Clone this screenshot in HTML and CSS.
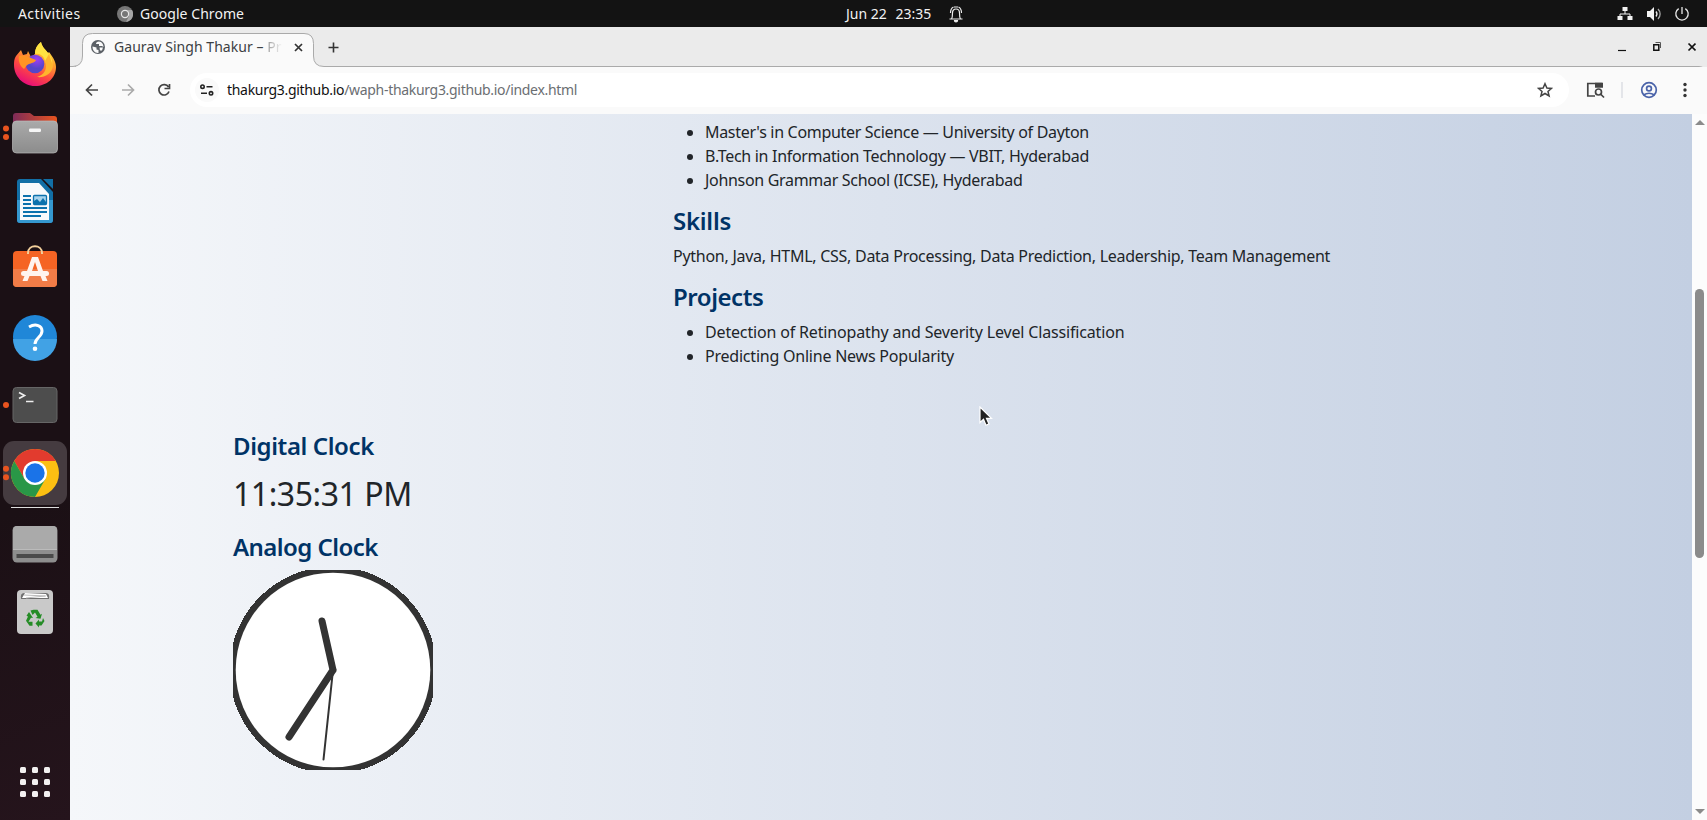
FILE: index.html
```
<!DOCTYPE html>
<html lang="en">
<head>
<meta charset="utf-8">
<title>Gaurav Singh Thakur</title>
<link rel="stylesheet" href="styles.css">
</head>
<body>
<header class="topbar">
  <span class="activities">Activities</span>
  <svg class="app-icon" width="16" height="16" viewBox="0 0 16 16"><circle cx="8" cy="8" r="8" fill="#777"/><path d="M8 4h7A8 8 0 0 1 9 16l3-6z" fill="#a5a5a5"/><circle cx="8" cy="8" r="4.200" fill="#e8e8e8"/><circle cx="8" cy="8" r="3" fill="#777"/></svg>
  <span class="app-name">Google Chrome</span>
  <div class="datetime"><span class="date">Jun 22</span><span class="time">23:35</span>
    <svg width="16" height="18" viewBox="0 0 16 18" fill="none" stroke="#eee" stroke-width="1.2"><path d="M1.5 14h13M3.5 14c1-1.5 1-3 1-6 0-2.5 1.300-4 3.500-4s3.500 1.500 3.500 4c0 3 0 4.500 1 6M2.500 8c0-3.500 1-5 3-6M13.500 8c0-3.500-1-5-3-6M6 2h4"/><path d="M6.500 15.500a1.500 1.500 0 0 0 3 0z" fill="#eee"/></svg>
  </div>
  <div class="tray">
    <svg width="16" height="16" viewBox="0 0 16 16"><path d="M5.500 1h5v4h-5zM0.500 10h5v4h-5zM10.500 10h5v4h-5z" fill="#f2f2f2"/><path d="M8 5v3M3 10.500V8h10v2.500" fill="none" stroke="#f2f2f2"/></svg>
    <svg width="16" height="16" viewBox="0 0 16 16"><path d="M1 5h3l4-4v14l-4-4H1z" fill="#f2f2f2"/><path d="M10 5.500a4 4 0 0 1 0 5" fill="none" stroke="#eee" stroke-width="1.300"/><path d="M12 3a7 7 0 0 1 0 10" fill="none" stroke="#aaa" stroke-width="1.300"/></svg>
    <svg width="16" height="16" viewBox="0 0 16 16" fill="none" stroke="#e6e6e6" stroke-width="1.300"><path d="M8 1v7M4.700 2.600a6.200 6.200 0 1 0 6.600 0"/></svg>
  </div>
</header>
<div class="desktop">
  <nav class="dock">
    <svg class="slot" viewBox="0 0 70 68">
      <defs><linearGradient id="fx" x1=".8" y1="0" x2=".3" y2="1"><stop offset="0" stop-color="#fff44f"/><stop offset=".35" stop-color="#ffa52c"/><stop offset=".65" stop-color="#ff4a40"/><stop offset="1" stop-color="#e5087d"/></linearGradient><radialGradient id="fp" cx=".6" cy=".25"><stop offset="0" stop-color="#a03df5"/><stop offset="1" stop-color="#5546c8"/></radialGradient></defs>
      <path d="M16 26L21 20l2 5 4-1 1-3 3 6 4-3c0-5 2-9 6-12 1 5 4 7 7 11l1-1c3 4 7 9 7 15 0 11-9 19-21 19S14 46 14 35c0-3 0-6 2-9z" fill="url(#fx)"/>
      <path d="M41 12c-5 4-6 8-6 12 5-1 9 2 10 7l5 10c3-4 4-12-2-18-3-4-6-6-7-11z" fill="#ffe341"/><path d="M45 31c3 8-1 14-8 16 7 1 15-3 16-11l-4-12z" fill="#ffb52d"/>
      <circle cx="35" cy="34" r="9.300" fill="url(#fp)"/><path d="M19 26c5-1 9 0 12 2l5 2c-1 3-5 3-7 4-3 1-3 3-5 5-4-3-6-8-5-13z" fill="#ff9424"/>
    </svg>
    <svg class="slot" viewBox="0 0 70 68">
      <defs><linearGradient id="ff"><stop offset="0" stop-color="#7e2b58"/><stop offset="1" stop-color="#e9541f"/></linearGradient><linearGradient id="gr" x2="0" y2="1"><stop offset="0" stop-color="#aaa"/><stop offset="1" stop-color="#8c8c8c"/></linearGradient></defs>
      <path d="M13 28V18q0-3 3-3h14l4 3h20q3 0 3 3v8z" fill="url(#ff)"/><rect x="12.500" y="23" width="45" height="32" rx="4" fill="url(#gr)" stroke="#bbb" stroke-width=".7"/><rect x="29" y="30.500" width="12" height="3.500" rx="1.200" fill="#f5f5f5"/>
      <circle cx="6" cy="30.500" r="3" fill="#e9541f"/><circle cx="6" cy="39" r="3" fill="#e9541f"/>
    </svg>
    <svg class="slot" viewBox="0 0 70 68">
      <path d="M20 13h21l12 13v28q0 3-3 3H20q-3 0-3-3V16q0-3 3-3z" fill="#126fa6"/><path d="M17 34h36v20q0 3-3 3H20q-3 0-3-3z" fill="#3598cf"/><path d="M20 17h19l10 11v26H20z" fill="#f7f9fb"/><path d="M43 13h10v10z" fill="#126fa6"/>
      <path d="M23 30h8M23 34h8M23 38h8M23 42h24M23 46h24M23 50h18" stroke="#0c72ad" stroke-width="2"/><rect x="33.500" y="29.500" width="13" height="9" rx="1" fill="#a8d3ec" stroke="#0c72ad" stroke-width="1.300"/><path d="M34 38v-3l3-2 3 3 3-4 3 4v2z" fill="#0c72ad"/>
    </svg>
    <svg class="slot" viewBox="0 0 70 68">
      <rect x="13" y="17" width="44" height="36" rx="4" fill="#f56424"/><path d="M13 35h44v14q0 4-4 4H17q-4 0-4-4z" fill="#f17c47"/><path d="M28 20v-1c0-9 14-9 14 0v1" fill="none" stroke="#f3cf9b" stroke-width="2"/><path d="M32 23h6l5 14h-5l-3-9-3 9h-5zM24.500 42h5l-2 5H22.500zM40.500 42h5l2 5h-5z" fill="#fff4ee"/><rect x="21" y="37" width="28" height="5" rx="2.500" fill="#fff4ee"/>
    </svg>
    <svg class="slot" viewBox="0 0 70 68">
      <circle cx="35" cy="35" r="22" fill="#2087d8"/><path d="M13 37h44a22 22 0 0 1-44 0z" fill="#41a2e5"/><path d="M29 25c7-4 13-1 13 4 0 6-7 7-7 13" fill="none" stroke="#fff" stroke-width="3"/><circle cx="35" cy="46.800" r="2.300" fill="#fff"/>
    </svg>
    <svg class="slot" viewBox="0 0 70 68">
      <rect x="13" y="17.500" width="44" height="35" rx="3.500" fill="#4d4d4d" stroke="#666"/><path d="M19 22.500l5.500 3-5.500 3M26 31.500h7.500" fill="none" stroke="#eee" stroke-width="1.700"/><circle cx="6" cy="35" r="3" fill="#e9541f"/>
    </svg>
    <svg class="slot" viewBox="0 0 70 68">
      <rect x="3" y="3" width="64" height="64" rx="11" fill="#453b40"/><circle cx="6" cy="30.700" r="3" fill="#e9541f"/><circle cx="6" cy="39.300" r="3" fill="#e9541f"/>
      <circle cx="35" cy="35" r="24" fill="#fcbf12"/><path d="M35 35V23h20.800A24 24 0 0 0 14.200 23L24.600 41z" fill="#e23b2e"/><path d="M35 35l10.400 6L35 59A24 24 0 0 1 14.200 23L24.600 41z" fill="#299747"/>
      <circle cx="35" cy="35" r="12" fill="#fff"/><circle cx="35" cy="35" r="9.700" fill="#1a73e8"/>
    </svg>
    <div class="separator"></div>
    <svg class="slot" viewBox="0 0 70 68">
      <rect x="12.500" y="16" width="45" height="36.500" rx="4.500" fill="#8e8e8e"/><path d="M13 40V20q0-4 4-4h36q4 0 4 4v20z" fill="#aaa"/><path d="M13 39.500h44" stroke="#bbb"/><rect x="16.500" y="44" width="37" height="4" fill="#4a4a4a"/>
    </svg>
    <svg class="slot" viewBox="0 0 70 68">
      <rect x="17" y="12" width="36" height="44" rx="4" fill="#c9c9c9"/><path d="M21 21q-1-6 3-6h22q4 0 3 6z" fill="#707070"/><path d="M22 20l3-5 21 1 2 4z" fill="#fff"/><path d="M24 17l22 1M26 20l19-2" stroke="#bbb"/>
      <g fill="#258c26"><path d="M30.500 32.500l3-.8h4l3 5 1.500-1-1.500 5-5-.8 2-1.200-2.500-4.200-2.500 2.500z"/><path d="M29 34l4 6-2-.3-2.500 4h4v4h-3l-3.500-5 2-4.200-1.500-.8z"/><path d="M43 40l1.500 3-3 4.500H39v2l-3.500-4 3.500-4v2h3z"/></g>
    </svg>
    <svg class="apps" viewBox="0 0 30 30" fill="#f2f0f0"><rect width="6" height="6" rx="1.500"/><rect x="12" width="6" height="6" rx="1.500"/><rect x="24" width="6" height="6" rx="1.500"/><rect y="12" width="6" height="6" rx="1.500"/><rect x="12" y="12" width="6" height="6" rx="1.500"/><rect x="24" y="12" width="6" height="6" rx="1.500"/><rect y="24" width="6" height="6" rx="1.500"/><rect x="12" y="24" width="6" height="6" rx="1.500"/><rect x="24" y="24" width="6" height="6" rx="1.500"/></svg>
  </nav>
  <main class="window">
    <div class="tabstrip">
      <svg class="strip-outline" width="1637" height="47" viewBox="0 0 1637 47"><path d="M0 47V39.500H3Q12.500 39 12.500 29V16.500Q12.500 6.500 22.500 6.500H234Q243.500 6.500 243.500 16.500V29Q243.500 39.500 254 39.500H1629Q1636 40 1636.500 47z" fill="#fafafa"/><path d="M0 39.500H3Q12.500 39 12.500 29V16.500Q12.500 6.500 22.500 6.500H234Q243.500 6.500 243.500 16.500V29Q243.500 39.500 254 39.500H1629Q1636 40 1636.500 47M.5 47Q1 41 6 39.500" fill="none" stroke="#aaa"/></svg>
      <div class="tab">
        <svg width="14" height="14" viewBox="0 0 14 14"><circle cx="7" cy="7" r="7" fill="#5b6066"/><path d="M1.500 6.500l4 1v2l2 .5v3c-4 .3-6-3-6-6.500zM8 1.500c-2 0-3 1-3 2.500h3v2h3l1.500 1c0-3-2-5.300-4.500-5.500zM8.500 7.500H12l-1 3H9z" fill="#fafafa"/></svg>
        <span class="tab-title">Gaurav Singh Thakur – <span>Pr</span></span>
        <svg width="9" height="9" viewBox="0 0 9 9" stroke="#333" stroke-width="1.700"><path d="M1 1l7 7M8 1L1 8"/></svg>
      </div>
      <svg class="newtab" width="11" height="11" viewBox="0 0 11 11" stroke="#333" stroke-width="1.600"><path d="M5.500 .5v10M.5 5.500h10"/></svg>
      <svg class="controls" width="78" height="10" viewBox="0 0 78 10" fill="none" stroke="#111"><path d="M0 8.500h8" stroke-width="1.200"/><path d="M35.800 2.800h5v5.500h-5z" stroke-width="1.500"/><path d="M37.500.5h5V6" stroke="#555"/><path d="M70.500 1.500l7 7M77.500 1.500l-7 7" stroke-width="1.700"/></svg>
    </div>
    <div class="toolbar">
      <svg class="nav-icons" width="90" height="14" viewBox="0 0 90 14" fill="none" stroke="#444" stroke-width="1.700"><path d="M13 7H2M7 1.500L1.500 7 7 12.500"/><path d="M37 7h11M43 1.500L48.500 7 43 12.500" stroke="#aaa"/><path d="M83.500 4A5.200 5.200 0 1 0 84 8.500M84.500 1v4.500h-5"/></svg>
      <div class="omnibox">
        <span class="site"><svg width="14" height="12" viewBox="0 0 14 12" fill="none" stroke="#222" stroke-width="1.600"><circle cx="2.500" cy="2.700" r="1.700"/><path d="M6.500 2.700h6M1 9.300h6"/><circle cx="11" cy="9.300" r="1.700"/></svg></span>
        <span class="url"><b>thakurg3.github.io</b>/waph-thakurg3.github.io/index.html</span>
        <svg class="star" width="16" height="16" viewBox="0 0 16 16" fill="none" stroke="#444" stroke-width="1.500"><path d="M8 1.700l1.900 4.300 4.600.4-3.500 3 1.100 4.600L8 11.500 3.900 14 5 9.400l-3.500-3 4.600-.4z"/></svg>
      </div>
      <svg class="tools" width="104" height="18" viewBox="0 0 104 18" fill="none" stroke="#444" stroke-width="1.700"><path d="M9 15H1.800V2.500H17"/><path d="M9 1.700h6.700q1.300 0 1.300 1.300v3.700H9z" fill="#444" stroke="none"/><circle cx="12.500" cy="11" r="3"/><path d="M14.500 13l3.500 3.500"/><path d="M36 1v16" stroke="#dfe1e5"/><g stroke="#4a63a9"><circle cx="63" cy="9" r="7.300"/><circle cx="63" cy="7.500" r="2.400"/><path d="M57.500 14q5.500-3.500 11 0"/></g><g fill="#333" stroke="none"><circle cx="99" cy="3.500" r="1.700"/><circle cx="99" cy="9" r="1.700"/><circle cx="99" cy="14.500" r="1.700"/></g></svg>
    </div>
    <div class="viewport">
      <div class="page">
        <div class="row">
          <section class="bio">
            <ul><li class="l1">Master's in Computer Science — University of Dayton</li><li class="l1">B.Tech in Information Technology — VBIT, Hyderabad</li><li class="l1">Johnson Grammar School (ICSE), Hyderabad</li></ul>
            <h3 class="h-skills">Skills</h3>
            <p>Python, Java, HTML, CSS, Data Processing, Data Prediction, Leadership, Team Management</p>
            <h3 class="h-projects">Projects</h3>
            <ul><li class="l2">Detection of Retinopathy and Severity Level Classification</li><li class="l3">Predicting Online News Popularity</li></ul>
          </section>
        </div>
        <section class="clocks">
          <h3 class="h-digital">Digital Clock</h3>
          <div class="digital">11:35:31 PM</div>
          <h3 class="h-analog">Analog Clock</h3>
          <svg class="analog" width="200" height="200" viewBox="0 0 200 200" stroke="#333" stroke-linecap="round"><circle cx="100" cy="100" r="100" fill="#333" stroke-width="7" shape-rendering="crispEdges"/><circle cx="100" cy="100" r="97.300" fill="#fff" stroke="none"/><path d="M100 100L89 51M100 100L56 167" stroke-width="7"/><path d="M100 100L90.500 189.500" stroke-width="2"/></svg>
        </section>
      </div>
      <div class="scrollbar"><i class="up"></i><i class="thumb"></i><i class="down"></i></div>
    </div>
  </main>
</div>
<svg class="cursor" width="14" height="21" viewBox="0 0 14 21"><path d="M1 1v15.500l3.500-3.300 2.500 6 3-1.300-2.500-5.500h5z" fill="#222" stroke="#fff" stroke-width="1.200"/></svg>
</body>
</html>
```
FILE: styles.css
```
* { box-sizing: border-box; }
body { margin: 0; width: 1707px; height: 820px; overflow: hidden; font-family: "Noto Sans", "Open Sans", sans-serif; display: flex; flex-direction: column; }
svg { display: block; flex: none; }
.topbar { height: 27px; flex: none; background: #131313; color: #f2f2f2; font-size: 14px; display: flex; align-items: center; white-space: pre; }
.activities { width: 99px; padding-left: 18px; letter-spacing: .42px; }
.app-icon { margin-right: 7px; margin-left: 18px; }
.app-name { letter-spacing: .05px; width: 120px; }
.datetime { display: flex; align-items: center; margin-left: 586px; }
.date { width: 49.5px; }
.time { width: 52.5px; }
.tray { display: flex; gap: 12.5px; margin-left: auto; margin-right: 17px; }
.desktop { flex: 1; display: flex; min-height: 0; }
.dock { width: 70px; background: linear-gradient(160deg, #1b1015 60%, #25141c); display: flex; flex-direction: column; padding-top: 3px; }
.slot { width: 70px; height: 68px; }
.separator { width: 48px; height: 4px; margin-left: 11px; border-top: 1px solid transparent; border-bottom: 2px solid transparent; background: #ddd; background-clip: padding-box; }
.apps { width: 30px; height: 30px; margin: auto 0 23px 20px; }
.window { flex: 1; display: flex; flex-direction: column; min-width: 0; }
.tabstrip { height: 40px; background: #ebebeb; display: flex; position: relative; color: #3c4043; font-size: 14px; }
.strip-outline { position: absolute; left: 0; top: 0; }
.tab { position: relative; width: 231px; margin-left: 12px; padding: 7px 10px 0 9px; display: flex; align-items: center; height: 33px; }
.tab-title { width: 170px; margin: 0 11px 0 9px; padding-bottom: 1px; white-space: nowrap; overflow: hidden; letter-spacing: .05px; }
.tab-title span { background: linear-gradient(90deg, #999, #f5f5f5); -webkit-background-clip: text; background-clip: text; color: transparent; }
.newtab { position: relative; margin: 15px 0 0 15px; }
.controls { position: relative; margin: 15px 11px 0 auto; }
.toolbar { height: 47px; background: #fafafa; display: flex; align-items: center; position: relative; padding: 0 15px 1px; }
.nav-icons { margin-right: 15px; }
.omnibox { width: 1379px; height: 34px; border-radius: 17px; background: #fff; display: flex; align-items: center; padding-left: 5px; }
.site { width: 24px; height: 24px; border-radius: 50%; background: #fafafa; display: grid; place-items: center; margin-right: 8px; }
.url { font-size: 14px; letter-spacing: -.31px; color: #6b6e72; padding-bottom: 2px; }
.url b { font-weight: 400; color: #111; }
.star { margin-left: auto; margin-right: 16px; }
.tools { margin-left: 17px; }
.viewport { flex: 1; display: flex; min-height: 0; }
.page { flex: 1; overflow: hidden; background: linear-gradient(90deg, #f5f7fa, #c3cfe2); color: #212529; padding: 6px 151px 0; font-size: 16px; line-height: 24px; }
.row { display: flex; height: 312px; padding-left: 440px; }
.bio { padding: 0 12px; white-space: nowrap; }
ul { margin: 0 0 15px; padding-left: 32px; }
p { margin: 0 0 15.5px; letter-spacing: -.266px; }
h3 { margin: 0 0 8px; font-size: 24px; line-height: 28.8px; font-weight: 600; color: #003366; }
.l1 { letter-spacing: -.31px; }
.l2 { letter-spacing: -.16px; }
.l3 { letter-spacing: -.22px; }
.h-skills { letter-spacing: -.25px; }
.h-projects { letter-spacing: -.45px; }
.h-digital { letter-spacing: -.4px; }
.h-analog { letter-spacing: -.55px; }
.clocks { padding: 0 12px; }
.digital { font-size: 32px; line-height: 48px; height: 48px; padding-top: 1px; letter-spacing: -.45px; margin-bottom: 16px; }
.scrollbar { width: 15px; background: #fcfcfc; display: flex; flex-direction: column; align-items: center; padding: 6px 0; }
.up { border: 5px solid transparent; border-top: 0; border-bottom: 5px solid #8b8b8b; }
.down { border: 5px solid transparent; border-bottom: 0; border-top: 5px solid #8b8b8b; margin-top: auto; }
.thumb { width: 9px; height: 269px; border-radius: 5px; background: #8b8b8b; margin-top: 164px; }
.cursor { position: absolute; left: 979px; top: 406px; }
```
